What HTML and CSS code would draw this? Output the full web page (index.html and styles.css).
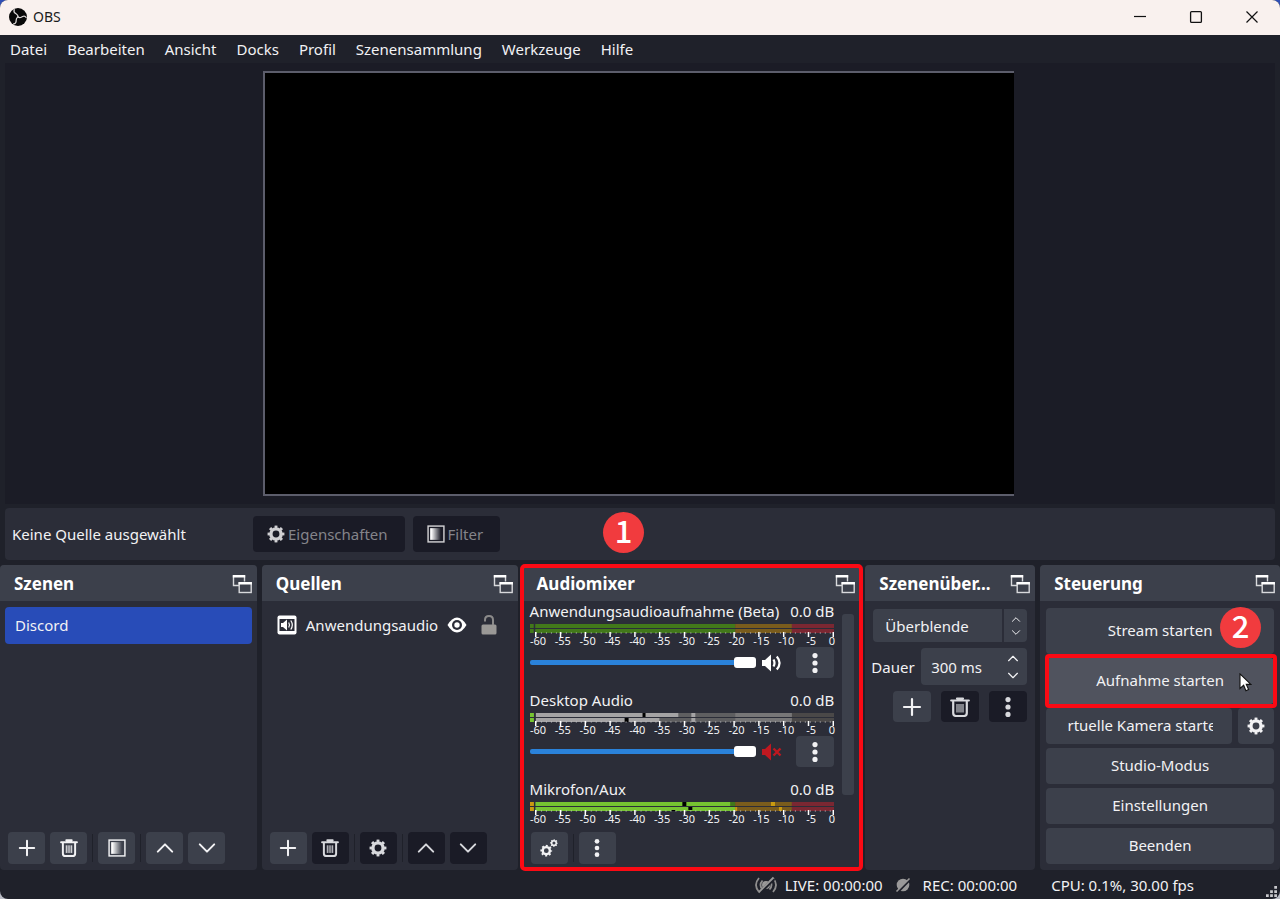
FILE: index.html
```html
<!DOCTYPE html>
<html lang="de">
<head>
<meta charset="utf-8">
<title>OBS</title>
<link rel="stylesheet" href="styles.css">
</head>
<body>
<svg class="defs" aria-hidden="true">
  <defs>
    <linearGradient id="fade" x1="0" x2="1" y1="0" y2="0"><stop offset="0.1" stop-color="#fff"/><stop offset="1" stop-color="#fff" stop-opacity="0"/></linearGradient>
    <symbol id="i-dock" viewBox="0 0 20 20"><g fill="none" stroke="#d8d9dc" stroke-width="1.4"><path d="M7 11.500H1.500V2h11v5.500"/><rect x="7.200" y="9" width="12" height="9.500"/></g><path d="M.8 1h12.400v2.600H.8zM6.500 8h13.400v2.600H6.500z" fill="#fff"/></symbol>
    <symbol id="i-plus" viewBox="0 0 20 20"><path d="M10 2v16M2 10h16" stroke="currentColor" stroke-width="2.200" fill="none" stroke-linecap="round"/></symbol>
    <symbol id="i-trash" viewBox="0 0 20 20"><path d="M1.200 3.500h17.600M7 1.500h6M3.200 5v11q0 3 3 3h7.600q3 0 3-3V5" stroke="currentColor" stroke-width="2.200" fill="none" stroke-linecap="round"/><path d="M7 7v8.500M9 7v8.500M11 7v8.500M13 7v8.500" stroke="currentColor" stroke-width="1.100" fill="none"/></symbol>
    <symbol id="i-filter" viewBox="0 0 20 20"><rect x="1.200" y="1.200" width="17.600" height="17.600" fill="none" stroke="currentColor" stroke-width="1.600"/><rect x="3.500" y="3.500" width="12" height="13" fill="url(#fade)"/></symbol>
    <symbol id="i-up" viewBox="0 0 20 20"><path d="M2 14l8-8 8 8" stroke="currentColor" stroke-width="2.200" fill="none" stroke-linecap="round" stroke-linejoin="round"/></symbol>
    <symbol id="i-down" viewBox="0 0 20 20"><path d="M2 6l8 8 8-8" stroke="currentColor" stroke-width="2.200" fill="none" stroke-linecap="round" stroke-linejoin="round"/></symbol>
    <symbol id="i-gear" viewBox="0 0 20 20"><g fill="none" stroke="currentColor"><circle cx="10" cy="10" r="5.700" stroke-width="3.800"/><circle cx="10" cy="10" r="8" stroke-width="2.800" pathLength="160" stroke-dasharray="10 10" stroke-dashoffset="5"/></g></symbol>
    <symbol id="i-dots" viewBox="0 0 20 20"><g fill="currentColor"><circle cx="10" cy="2.600" r="2.600"/><circle cx="10" cy="10" r="2.600"/><circle cx="10" cy="17.400" r="2.600"/></g></symbol>
    <symbol id="ticks" viewBox="0 0 306 5" preserveAspectRatio="none"><path d="M6 1h300" stroke="#c9cacf" stroke-width="1" stroke-dasharray="1 4" fill="none"/><path d="M5 2.500h301" stroke="#fff" stroke-width="5" stroke-dasharray="1.500 23.400" fill="none"/></symbol>
  </defs>
</svg>
<div class="window">
  <header class="titlebar">
    <svg class="logo" viewBox="0 0 20 20"><circle cx="10" cy="10" r="9" fill="#090909"/><g fill="none" stroke="#d9d5d4" stroke-width="1.300" stroke-linecap="round"><path id="arm" d="M10 10C10.300 7.500 8.600 7.200 7.300 6.300 5.900 5.300 5.700 4 6.300 2.800"/><use href="#arm" transform="rotate(120 10 10)"/><use href="#arm" transform="rotate(240 10 10)"/></g></svg>
    <span class="title">OBS</span>
    <button class="caption" aria-label="Minimieren"><svg viewBox="0 0 14 14"><path d="M1 6.500h12" stroke="#111" stroke-width="1.200"/></svg></button>
    <button class="caption" aria-label="Maximieren"><svg viewBox="0 0 14 14"><rect x="1.600" y="1.600" width="10.800" height="10.800" rx="1" fill="none" stroke="#111" stroke-width="1.300"/></svg></button>
    <button class="caption" aria-label="Schließen"><svg viewBox="0 0 14 14"><path d="M1.500 1.500l11 11M12.500 1.500l-11 11" stroke="#111" stroke-width="1.200"/></svg></button>
  </header>
  <nav class="menubar">
    <button>Datei</button><button>Bearbeiten</button><button>Ansicht</button><button>Docks</button><button>Profil</button><button>Szenensammlung</button><button>Werkzeuge</button><button>Hilfe</button>
  </nav>
  <main class="preview"><div class="canvas"></div></main>
  <section class="sourcebar">
    <span class="source-name">Keine Quelle ausgewählt</span>
    <button class="btn dark labelled"><svg><use href="#i-gear"/></svg>Eigenschaften</button>
    <button class="btn dark labelled"><svg><use href="#i-filter"/></svg>Filter</button>
    <span class="badge badge-one">1</span>
  </section>
  <div class="docks">
    <section class="dock">
      <h2 class="dock-head"><span>Szenen</span><svg><use href="#i-dock"/></svg></h2>
      <ul class="list"><li class="row selected">Discord</li></ul>
      <div class="tools">
        <button class="btn tool" aria-label="Szene hinzufügen"><svg><use href="#i-plus"/></svg></button>
        <button class="btn tool" aria-label="Szene entfernen"><svg><use href="#i-trash"/></svg></button>
        <i class="sep"></i>
        <button class="btn tool" aria-label="Filter"><svg><use href="#i-filter"/></svg></button>
        <i class="sep"></i>
        <button class="btn tool" aria-label="Nach oben"><svg><use href="#i-up"/></svg></button>
        <button class="btn tool" aria-label="Nach unten"><svg><use href="#i-down"/></svg></button>
      </div>
    </section>
    <section class="dock">
      <h2 class="dock-head"><span>Quellen</span><svg><use href="#i-dock"/></svg></h2>
      <ul class="list"><li class="row source">
        <svg viewBox="0 0 20 20"><rect x=".5" y=".5" width="19" height="19" rx="2" fill="#fff"/><rect x="2.500" y="4" width="15" height="12" fill="#2b2d38"/><path d="M4 8h2l4-3.500v11L6 12H4z" fill="#fff"/><path d="M11.700 7.500q1.600 2.500 0 5M13.800 5.500q3 4.500 0 9" fill="none" stroke="#fff" stroke-width="1.200"/></svg>
        <span class="source-label">Anwendungsaudio</span>
        <svg viewBox="0 0 20 20"><path d="M.5 10Q5 2.500 10 2.500T19.500 10Q15 17.500 10 17.500T.5 10z" fill="#fff"/><circle cx="10" cy="10" r="5" fill="#2b2d38"/><circle cx="10" cy="10" r="2.700" fill="#fff"/></svg>
        <svg class="lock" viewBox="0 0 20 20"><rect x="2.500" y="9.500" width="15" height="10" rx="1.500" fill="#9a9896"/><path d="M6 6.500V5q0-4 4-4t4 4v5" fill="none" stroke="#8b8a8a" stroke-width="2"/></svg>
      </li></ul>
      <div class="tools">
        <button class="btn tool" aria-label="Quelle hinzufügen"><svg><use href="#i-plus"/></svg></button>
        <button class="btn tool dark" aria-label="Quelle entfernen"><svg><use href="#i-trash"/></svg></button>
        <i class="sep"></i>
        <button class="btn tool dark" aria-label="Eigenschaften"><svg><use href="#i-gear"/></svg></button>
        <i class="sep"></i>
        <button class="btn tool dark" aria-label="Nach oben"><svg><use href="#i-up"/></svg></button>
        <button class="btn tool dark" aria-label="Nach unten"><svg><use href="#i-down"/></svg></button>
      </div>
    </section>
    <section class="dock mixer">
      <h2 class="dock-head"><span>Audiomixer</span><svg><use href="#i-dock"/></svg></h2>
      <div class="mixer-body">
        <div class="channels">
          <div class="channel">
            <div class="channel-name"><label for="v1">Anwendungsaudioaufnahme (Beta)</label><span>0.0 dB</span></div>
            <svg class="meter" viewBox="0 0 306 13" preserveAspectRatio="none"><path d="M0 0h206v9H0z" fill="#42781a"/><path d="M206 0h57v9h-57z" fill="#7a5c1c"/><path d="M263 0h43v9h-43z" fill="#7b2732"/><path d="M0 4.500h306" stroke="#2b2d38"/><path d="M4.500 0v9" stroke="#2b2d38" stroke-width="1.500"/><use href="#ticks" y="8" width="306" height="5"/></svg>
            <div class="scale"><span>-60</span><span>-55</span><span>-50</span><span>-45</span><span>-40</span><span>-35</span><span>-30</span><span>-25</span><span>-20</span><span>-15</span><span>-10</span><span>-5</span><span>0</span></div>
            <div class="fader"><input id="v1" type="range" value="100">
              <button class="mute" aria-label="Stummschalten"><svg viewBox="0 0 20 20"><path d="M0 7h3l6-5.500v17L3 13H0z" fill="#fff"/><path d="M11.500 6.500q2 3.500 0 7M14.800 3.500q5.500 6.500 0 13" fill="none" stroke="#fff" stroke-width="2.200"/></svg></button>
              <button class="btn more" aria-label="Optionen"><svg><use href="#i-dots"/></svg></button></div>
          </div>
          <div class="channel">
            <div class="channel-name"><label for="v2">Desktop Audio</label><span>0.0 dB</span></div>
            <svg class="meter" viewBox="0 0 306 13" preserveAspectRatio="none"><path d="M0 0h306v9H0z" fill="#4a4848"/><path d="M149 0h57v9h-57zM130 5h20v4h-20z" fill="#5e5e60"/><path d="M206 0h57v9h-57z" fill="#777677"/><path d="M6 0h143v4.500H6zM6 4.500h124V9H6z" fill="#a4a3a4"/><path d="M0 0h4v9H0z" fill="#76c431"/><path d="M162 0h4v9h-4z" fill="#a4a3a4"/><path d="M113 0h3v4h-3zM95 5h4v4h-4z" fill="#000"/><path d="M0 4.500h306" stroke="#2b2d38"/><path d="M4.700 0v9" stroke="#2b2d38" stroke-width="1.500"/><use href="#ticks" y="8" width="306" height="5"/></svg>
            <div class="scale"><span>-60</span><span>-55</span><span>-50</span><span>-45</span><span>-40</span><span>-35</span><span>-30</span><span>-25</span><span>-20</span><span>-15</span><span>-10</span><span>-5</span><span>0</span></div>
            <div class="fader"><input id="v2" type="range" value="100">
              <button class="mute" aria-label="Stummschaltung aufheben"><svg viewBox="0 0 20 20"><path d="M0 7h3l6-5.500v17L3 13H0z" fill="#c01820"/><path d="M11.500 6.500l7 7M18.500 6.500l-7 7" stroke="#c01820" stroke-width="2.400"/></svg></button>
              <button class="btn more" aria-label="Optionen"><svg><use href="#i-dots"/></svg></button></div>
          </div>
          <div class="channel">
            <div class="channel-name"><span>Mikrofon/Aux</span><span>0.0 dB</span></div>
            <svg class="meter" viewBox="0 0 306 13" preserveAspectRatio="none"><path d="M0 0h206v9H0z" fill="#76c431"/><path d="M201 0h5v4h-5z" fill="#42781a"/><path d="M206 0h57v9h-57z" fill="#7a5c1c"/><path d="M263 0h43v9h-43z" fill="#7b2732"/><path d="M0 0h4v9H0zM242 0h4v4h-4zM250 5h3v4h-3zM206 5h2v4h-2z" fill="#c99a10"/><path d="M153 0h4v4h-4zM159 5h4v3h-4zM142 8h4v1h-4z" fill="#000"/><path d="M0 4.500h306" stroke="#2b2d38"/><path d="M4.700 0v9" stroke="#2b2d38" stroke-width="1.500"/><use href="#ticks" y="8" width="306" height="5"/></svg>
            <div class="scale"><span>-60</span><span>-55</span><span>-50</span><span>-45</span><span>-40</span><span>-35</span><span>-30</span><span>-25</span><span>-20</span><span>-15</span><span>-10</span><span>-5</span><span>0</span></div>
          </div>
        </div>
        <div class="scrollbar"></div>
      </div>
      <div class="tools">
        <button class="btn tool" aria-label="Erweiterte Audioeigenschaften"><svg viewBox="0 0 20 20"><use href="#i-gear" x="0" y="6" width="14" height="14"/><use href="#i-gear" x="11" y="0" width="9" height="9"/></svg></button>
        <i class="sep"></i>
        <button class="btn tool" aria-label="Audiomixermenü"><svg><use href="#i-dots"/></svg></button>
      </div>
    </section>
    <section class="dock">
      <h2 class="dock-head"><span>Szenenüber...</span><svg><use href="#i-dock"/></svg></h2>
      <div class="transitions">
        <div class="combo"><select aria-label="Übergang"><option>Überblende</option></select><span class="steps"><svg><use href="#i-up"/></svg><svg><use href="#i-down"/></svg></span></div>
        <div class="duration"><label for="dur">Dauer</label><div class="spin"><input id="dur" type="text" value="300 ms"><span class="steps large"><svg><use href="#i-up"/></svg><svg><use href="#i-down"/></svg></span></div></div>
        <div class="trans-tools">
          <button class="btn more" aria-label="Hinzufügen"><svg><use href="#i-plus"/></svg></button>
          <button class="btn more dark" aria-label="Entfernen"><svg><use href="#i-trash"/></svg></button>
          <button class="btn more dark" aria-label="Eigenschaften"><svg><use href="#i-dots"/></svg></button>
        </div>
      </div>
    </section>
    <section class="dock">
      <h2 class="dock-head"><span>Steuerung</span><svg><use href="#i-dock"/></svg></h2>
      <div class="controls">
        <div class="stream"><button class="btn wide tall">Stream starten</button><span class="badge badge-two">2</span></div>
        <div class="record"><button class="btn wide tall hover">Aufnahme starten</button>
          <svg class="cursor" viewBox="0 0 14 22"><path d="M1.500 1v16l4-3.500 2.500 6 3-1.300-2.600-5.700h5z" fill="#fff" stroke="#111" stroke-width="1.200"/></svg></div>
        <div class="camera"><button class="btn wide"><span class="clip">Virtuelle Kamera starten</span></button><button class="btn config" aria-label="Kamera einrichten"><svg><use href="#i-gear"/></svg></button></div>
        <button class="btn wide">Studio-Modus</button>
        <button class="btn wide">Einstellungen</button>
        <button class="btn wide">Beenden</button>
      </div>
    </section>
  </div>
  <footer class="status">
    <span class="stat live"><svg viewBox="0 0 24 20"><g fill="none" stroke="#8f8e8e" stroke-width="1.800"><path d="M5 3q-6 7 0 14M8.500 5.500q-4 4.500 0 9M19 3q6 7 0 14M15.500 5.500q4 4.500 0 9"/></g><circle cx="12" cy="10" r="4" fill="#9a9999"/><path d="M5 18.500L20 3.500" stroke="#1f212a" stroke-width="3.600"/><path d="M4.500 17.500L19.500 2.500" stroke="#9a9999" stroke-width="1.800"/></svg>LIVE: 00:00:00</span>
    <span class="stat rec"><svg viewBox="0 0 16 20"><circle cx="8" cy="10" r="6.300" fill="#9a9999"/><path d="M2 18L15.500 4" stroke="#1f212a" stroke-width="2.400"/><path d="M1.500 16.500l13-13" stroke="#9a9999" stroke-width="1.600"/></svg>REC: 00:00:00</span>
    <span class="stat cpu">CPU: 0.1%, 30.00 fps</span>
    <svg class="grip" viewBox="0 0 12 12"><path d="M9 0h3v3H9zM9 4.500h3v3H9zM9 9h3v3H9zM4.500 4.500h3v3h-3zM4.500 9h3v3h-3zM0 9h3v3H0z" fill="#c8c8cc"/></svg>
  </footer>
</div>
</body>
</html>
```
FILE: styles.css
```css
* { box-sizing: border-box; }
body {
  margin: 0;
  background: linear-gradient(#2f4fb5 50%, #b9bbc4 50%);
  font: 15px/20px "Noto Sans", "Open Sans", sans-serif;
  color: #f2f2f4;
}
button, input, select { font: inherit; color: inherit; border: 0; margin: 0; padding: 0; background: none; }
svg { display: block; flex: none; width: 20px; height: 20px; }
.defs { position: absolute; width: 0; height: 0; }

.window {
  display: flex;
  flex-direction: column;
  min-height: 100vh;
  overflow: hidden;
  background: #1f212a;
  border-radius: 8px;
}
.titlebar {
  display: flex;
  align-items: center;
  height: 35px;
  padding: 0 0 1px 8px;
  background: #f9f1ee;
  color: #1b1b1b;
}
.title { flex: 1; margin-left: 5px; font-size: 14px; }
.caption { display: flex; align-items: center; justify-content: center; width: 56px; height: 34px; }
.caption svg { width: 14px; height: 14px; }
.menubar { display: flex; gap: 20px; height: 28px; padding: 0 10px; }

.preview {
  display: flex;
  flex: 1;
  align-items: center;
  justify-content: center;
  margin: 0 5px;
  padding: 0 3px 0 0;
  background: #1b1c26;
}
.canvas {
  width: 59.3%;
  aspect-ratio: 751 / 425;
  background: #000;
  border: solid #5c5d6b;
  border-width: 2px 0 2px 2px;
}

.sourcebar {
  position: relative;
  display: flex;
  align-items: center;
  gap: 8px;
  height: 52px;
  margin: 4px 5px 5px;
  padding: 0 7px;
  background: #2b2d38;
  border-radius: 4px;
}
.source-name { width: 233px; }
.btn {
  display: flex;
  align-items: center;
  justify-content: center;
  background: #3c404b;
  border-radius: 4px;
}
.btn.dark { background: #1a1b26; color: #d8d9dd; }
.btn.dark.labelled { height: 36px; padding: 0 17px 0 14px; color: #84848a; }
.labelled svg { width: 18px; height: 18px; margin-right: 3px; color: #d0d0d3; }

.badge {
  position: absolute;
  display: flex;
  align-items: center;
  justify-content: center;
  width: 41px;
  height: 41px;
  padding-bottom: 6px;
  border-radius: 50%;
  background: #f13b3e;
  color: #fff;
  font: 500 31px/35px "Noto Sans CJK SC", sans-serif;
}
.badge-one { left: 47.1%; top: 4px; }
.badge-two { right: 13px; top: -1px; }

.docks {
  display: grid;
  grid-template-columns: minmax(0, 257fr) minmax(0, 256fr) minmax(0, 338fr) minmax(0, 170fr) minmax(0, 240fr);
  gap: 5px;
}
.dock { display: flex; flex-direction: column; background: #2b2d38; border-radius: 4px; }
.dock-head {
  display: flex;
  align-items: center;
  justify-content: space-between;
  height: 36px;
  margin: 0;
  padding: 1px 5px 0 14px;
  background: #3c404b;
  border-radius: 4px 4px 0 0;
  font-size: 17px;
  color: #fff;
}
.list { flex: 1; margin: 0; padding: 6px 5px; list-style: none; }
.row { display: flex; align-items: center; height: 37px; padding: 0 10px 2px; border-radius: 4px; }
.selected { background: #284cb8; }
.source-label { width: 141px; margin-left: 9px; white-space: nowrap; }
.lock { margin-left: 12px; }
.tools { display: flex; gap: 5px; padding: 0 8px 6px; }
.tool { width: 37px; height: 32px; }
.tool svg { width: 18px; height: 18px; }
.sep { width: 1px; margin: 2px 0; background: #1f212a; }

.mixer { position: relative; }
.mixer::after {
  content: "";
  position: absolute;
  inset: -1px -3px;
  border: 4px solid #fb0a14;
  border-radius: 5px;
  pointer-events: none;
}
.mixer-body { display: flex; flex: 1 1 0; min-height: 0; margin-bottom: 6px; padding: 0 6px 0 7px; overflow: hidden; }
.channels { flex: 1; min-width: 0; }
.channel { margin-bottom: 12px; }
.channel-name { display: flex; justify-content: space-between; margin-bottom: 3px; white-space: nowrap; }
.meter { width: 100%; height: 13px; }
.scale {
  display: grid;
  grid-template-columns: repeat(13, minmax(0, 1fr));
  height: 12px;
  margin: -2px -14px 0 -4px;
  font-size: 11px;
  line-height: 11px;
  text-align: center;
}
.scale span:last-child { padding-right: 8px; }
.fader { display: flex; align-items: center; }
.fader input { flex: 1; min-width: 0; height: 12px; appearance: none; }
.fader input::-webkit-slider-runnable-track { height: 5px; border-radius: 2px; background: #2a82da; }
.fader input::-webkit-slider-thumb { appearance: none; width: 22px; height: 11px; margin-top: -3px; border-radius: 3px; background: #fff; }
.mute { margin: 0 14px 0 6px; }
.more { width: 38px; height: 31px; }
.scrollbar { width: 12px; margin: 13px 0 31px 8px; border-radius: 3px; background: #3c404b; }

.transitions { display: flex; flex-direction: column; gap: 6px; padding: 8px 8px 0 6px; }
.combo { position: relative; display: flex; margin-left: 2px; }
.combo select { width: 100%; height: 33px; padding: 0 12px; appearance: none; background: #3c404b; border-radius: 4px; }
.steps {
  position: absolute;
  right: 0;
  top: 0;
  display: flex;
  flex-direction: column;
  align-items: center;
  justify-content: center;
  gap: 4px;
  width: 25px;
  height: 100%;
  border-left: 2px solid #2b2d38;
  pointer-events: none;
}
.steps svg { width: 10px; height: 9px; }
.steps.large { width: 28px; border: 0; gap: 6px; }
.steps.large svg { width: 12px; height: 11px; }
.duration { display: flex; align-items: center; justify-content: space-between; }
.spin { position: relative; width: 106px; }
.spin input { width: 100%; height: 37px; padding: 0 10px; background: #3c404b; border-radius: 4px; }
.trans-tools { display: flex; justify-content: flex-end; gap: 10px; }

.controls { display: flex; flex-direction: column; gap: 4px; padding: 7px 6px 6px; }
.wide { width: 100%; height: 36px; padding-bottom: 2px; }
.wide.tall { height: 46px; }
.stream { position: relative; }
.record { position: relative; }
.record::after { content: ""; position: absolute; inset: -4px -3px -4px -1px; border: 4px solid #fb0a14; border-radius: 4px; }
.hover { background: #50535e; }
.cursor { position: absolute; right: 22px; top: 15px; width: 14px; height: 20px; }
.camera { display: flex; gap: 6px; }
.camera .wide { flex: 1; min-width: 0; padding: 0 19px 2px 21px; }
.clip { display: flex; justify-content: center; width: 100%; overflow: hidden; white-space: nowrap; }
.config { width: 36px; }
.config svg { width: 18px; height: 18px; }

.status { display: flex; align-items: center; justify-content: flex-end; height: 29px; padding-right: 3px; }
.stat { display: flex; align-items: center; white-space: nowrap; }
.live svg { width: 24px; margin-right: 7px; }
.rec { margin-left: 12px; }
.rec svg { width: 16px; margin-right: 12px; }
.cpu { margin: 0 72px 0 34px; }
.grip { align-self: flex-end; width: 11px; height: 11px; margin-bottom: 2px; }
```
